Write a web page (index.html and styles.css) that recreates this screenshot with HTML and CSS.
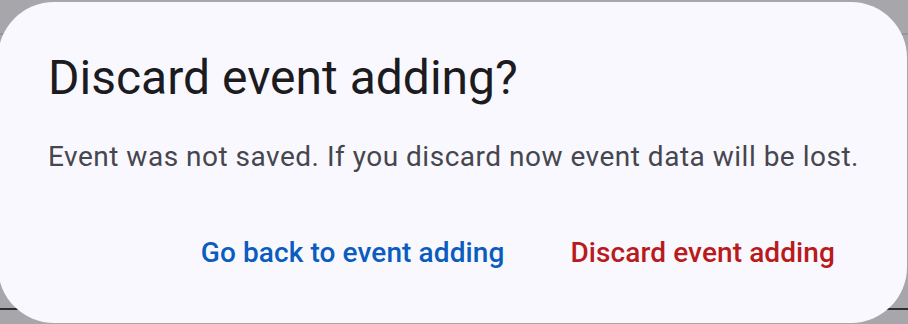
FILE: index.html
```html
<!DOCTYPE html>
<html>
<head>
<meta charset="utf-8">
<link rel="stylesheet" href="styles.css">
</head>
<body>
<div class="backdrop">
  <div class="line line-top"></div>
  <div class="line line-bottom"></div>
  <div class="dialog">
    <h1 class="title">Discard event adding?</h1>
    <p class="message">Event was not saved. If you discard now event data will be lost.</p>
    <div class="actions">
      <button class="btn btn-back">Go back to event adding</button>
      <button class="btn btn-discard">Discard event adding</button>
    </div>
  </div>
</div>
</body>
</html>
```

FILE: styles.css
```css
html, body {
  margin: 0;
  padding: 0;
}
body {
  width: 908px;
  height: 324px;
  overflow: hidden;
  font-family: Roboto, "Liberation Sans", sans-serif;
}
.backdrop {
  position: relative;
  width: 908px;
  height: 324px;
  background: #a7a6ab;
}
.line {
  position: absolute;
  left: 0;
  right: 0;
  height: 2px;
}
.line-top {
  top: 33px;
  background: #96959a;
}
.line-bottom {
  top: 308px;
  background: #2f2e33;
}
.dialog {
  position: absolute;
  left: -2px;
  top: 2px;
  width: 909px;
  height: 321px;
  box-sizing: border-box;
  border-radius: 56px;
  background: #f9f8fe;
  padding: 44px 48px 0 50px;
  display: flex;
  flex-direction: column;
}
.title {
  margin: 0;
  font-size: 48px;
  font-weight: 400;
  line-height: 64px;
  color: #1b1b20;
}
.message {
  margin: 27px 0 0;
  font-size: 28px;
  line-height: 40px;
  letter-spacing: 0.5px;
  color: #46464e;
}
.actions {
  display: flex;
  justify-content: flex-end;
  gap: 18px;
  margin-top: 56px;
}
.btn {
  border: none;
  background: none;
  font-family: Roboto, "Liberation Sans", sans-serif;
  font-size: 28px;
  font-weight: 500;
  line-height: 40px;
  letter-spacing: 0.1px;
  padding: 0 24px;
  height: 40px;
}
.btn-back {
  color: #0a5dbe;
}
.btn-discard {
  color: #b91b1c;
}
```
